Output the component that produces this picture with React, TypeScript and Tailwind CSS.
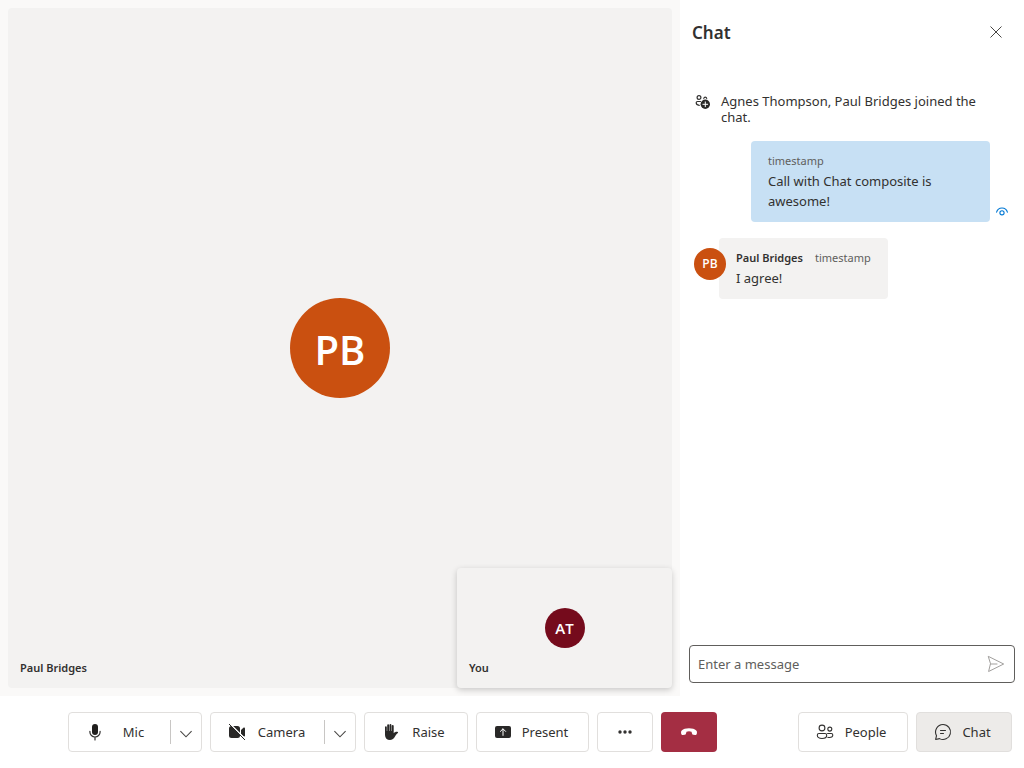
import type { ReactNode } from 'react';

const buttonBox =
  'flex h-10 items-center rounded border border-[#e1dfdd] bg-white text-[13px] text-[#323130]';

const initials = "flex items-center justify-center rounded-full font-['Open_Sans',sans-serif] font-semibold text-white";

function Icon({ children }: { children: ReactNode }) {
  return (
    <svg viewBox="0 0 20 20" className="h-5 w-5 shrink-0" fill="none" aria-hidden="true">
      {children}
    </svg>
  );
}

const MicIcon = () => (
  <Icon>
    <rect x="7" y="2" width="6" height="11" rx="3" fill="#201f1e" />
    <path d="M4.900 9.300v.6a5.100 5.100 0 0 0 10.200 0v-.6M10 15.200V18" stroke="#323130" strokeWidth="1.200" strokeLinecap="round" />
  </Icon>
);

const CameraOffIcon = () => (
  <Icon>
    <rect x="2" y="4" width="11" height="12" rx="2.500" fill="#292827" />
    <path d="m14 7.900 2.700-2.300c.5-.4 1.300-.1 1.300.6v7.600c0 .7-.8 1-1.300.6L14 12.100Z" fill="#292827" />
    <path d="m3 1.700 15.500 15.500" stroke="#fff" strokeWidth="1.300" />
    <path d="m2.300 2.300 15.400 15.400" stroke="#292827" strokeWidth="1" strokeLinecap="round" />
  </Icon>
);

const HandIcon = () => (
  <Icon>
    <path
      d="M4 5.200a.9.9 0 0 1 1.800 0V9h.4V3.300a.95.95 0 0 1 1.900 0V9h.4V2.900a.95.95 0 0 1 1.900 0V9h.4V3.900a.9.9 0 0 1 1.900 0v7.300c.9-1 2.100-1.600 3.600-1.400.8.100 1 .8.500 1.300-1.600 1.200-2.300 2.900-3.400 4.500C12.300 17.200 11 18 9 18c-3 0-5-1.900-5-5Z"
      fill="#292827"
    />
  </Icon>
);

const PresentIcon = () => (
  <Icon>
    <rect x="2" y="4" width="16" height="12" rx="2" fill="#292827" />
    <path d="M10 13.400V7M7.400 9.400 10 6.800l2.600 2.600" stroke="#fff" strokeLinecap="round" strokeLinejoin="round" />
  </Icon>
);

const MoreIcon = () => (
  <Icon>
    <g fill="#323130">
      <circle cx="5" cy="10" r="1.700" />
      <circle cx="10" cy="10" r="1.700" />
      <circle cx="15" cy="10" r="1.700" />
    </g>
  </Icon>
);

const EndCallIcon = () => (
  <Icon>
    <path
      d="m17.950 10.970-.16.840c-.15.790-.87 1.300-1.700 1.220l-1.630-.16c-.72-.07-1.250-.6-1.460-1.370l-.5-1.750a6.600 6.600 0 0 0-5 0L7 11.500c-.2.770-.73 1.300-1.450 1.370l-1.640.16c-.82.080-1.540-.43-1.700-1.220l-.160-.840c-.18-.9.080-1.800.7-2.440C4.300 7 6.750 6.200 10 6.200s5.700.8 7.260 2.330c.62.640.87 1.540.69 2.440Z"
      fill="#fff"
    />
  </Icon>
);

const PeopleIcon = () => (
  <Icon>
    <g stroke="#323130" strokeWidth="1.100">
      <circle cx="7" cy="6" r="2.900" />
      <circle cx="14.800" cy="7.100" r="2" />
      <path d="M4 11.500h6a1.700 1.700 0 0 1 1.700 1.700c0 2.100-1.900 3.300-4.700 3.300s-4.700-1.200-4.700-3.300A1.700 1.700 0 0 1 4 11.500Z" />
      <path d="M12.600 11.500h3.700a1.500 1.500 0 0 1 1.500 1.500c0 1.600-1.400 2.500-3.400 2.500-.6 0-1.100-.1-1.600-.2" strokeLinecap="round" />
    </g>
  </Icon>
);

const ChatIcon = () => (
  <Icon>
    <path d="M10 2.500a7.500 7.500 0 1 1-3.500 14.130l-3.850.86.870-3.840A7.500 7.500 0 0 1 10 2.500Z" stroke="#323130" strokeWidth="1.100" strokeLinejoin="round" />
    <path d="M7.500 8.500h5M7.500 11.500h3" stroke="#323130" strokeLinecap="round" />
  </Icon>
);

const ChevronIcon = () => (
  <svg viewBox="0 0 12 12" className="h-3 w-3" fill="none" aria-hidden="true">
    <path d="m.4 3.200 5.600 5.600 5.600-5.600" stroke="#484644" strokeWidth="1.100" />
  </svg>
);

function SplitButton({ icon, label, width }: { icon: ReactNode; label: string; width: string }) {
  return (
    <div className={`${buttonBox} ${width}`}>
      <button type="button" className="flex h-full flex-1 items-center gap-2 px-4">
        {icon}
        <span className="flex-1 pt-0.5 text-center">{label}</span>
      </button>
      <button type="button" aria-label={`${label} options`} className="flex h-6 w-[31px] items-center justify-center border-l border-[#c8c6c4] pt-1">
        <ChevronIcon />
      </button>
    </div>
  );
}

function BarButton({ icon, label, width, active }: { icon: ReactNode; label: string; width: string; active?: boolean }) {
  return (
    <button type="button" className={`${buttonBox} ${width} gap-1 pr-[15px] pl-4 ${active ? 'bg-[#edebe9]!' : ''}`}>
      {icon}
      <span className="flex-1 pt-0.5 text-center">{label}</span>
    </button>
  );
}

function ChatPane() {
  return (
    <aside className="flex w-[344px] shrink-0 flex-col">
      <header className="flex h-16 items-center justify-between pr-5 pl-3">
        <h2 className="pt-0.5 text-[17px] leading-6 font-semibold">Chat</h2>
        <button type="button" aria-label="Close" className="flex h-4 w-4 items-center justify-center">
          <svg viewBox="0 0 12 12" className="h-3 w-3" fill="none" aria-hidden="true">
            <path d="m.5.500 11 11M11.500.500l-11 11" stroke="#484644" />
          </svg>
        </button>
      </header>

      <div className="flex flex-1 flex-col pt-[29px]">
        <div className="flex gap-2 pr-8 pl-[13px] text-[13px] leading-4">
          <Icon>
            <g stroke="#323130" strokeWidth="1.200">
              <circle cx="6" cy="4.500" r="1.900" />
              <path d="M10.800 5.300a1.500 1.500 0 0 1 2.900 0M7.500 8.500h-3a1.300 1.300 0 0 0-1.300 1.300c0 1.500 1.200 2.400 3 2.600" strokeLinecap="round" />
            </g>
            <circle cx="12.300" cy="11.300" r="4.700" fill="#292827" />
            <path d="M12.300 8.900v4.800M9.900 11.300h4.800" stroke="#fff" strokeLinecap="round" />
          </Icon>
          <p>Agnes Thompson, Paul Bridges joined the chat.</p>
        </div>

        <div className="mt-4 flex items-end justify-end gap-[6px] pr-4">
          <div className="w-[239px] rounded bg-[#c7e0f4] px-[17px] pt-[10px] pb-[11px] text-[13px] leading-5">
            <div className="text-[11px] leading-5 text-[#605e5c]">timestamp</div>
            <p>Call with Chat composite is awesome!</p>
          </div>
          <svg viewBox="0 0 12 12" className="mb-1 h-3 w-3" fill="none" aria-label="Seen" role="img">
            <path d="M.6 6.200C1.300 3.500 3.400 2 6 2s4.700 1.500 5.400 4.200" stroke="#0078d4" strokeWidth="1.100" strokeLinecap="round" />
            <circle cx="6" cy="6.800" r="2.100" stroke="#0078d4" strokeWidth="1.100" />
          </svg>
        </div>

        <div className="mt-4 flex pl-[14px]">
          <div className={`${initials} z-10 mt-[10px] -mr-[7px] h-8 w-8 bg-[#ca5010] text-xs`}>PB</div>
          <div className="rounded bg-[#f3f2f1] px-[17px] pt-[10px] pb-[11px] text-[13px] leading-5">
            <div className="flex gap-3 text-[11px] leading-5">
              <span className="font-semibold">Paul Bridges</span>
              <span className="text-[#605e5c]">timestamp</span>
            </div>
            <p>I agree!</p>
          </div>
        </div>
      </div>

      <form className="mr-[9px] mb-[13px] ml-[9px] flex h-[38px] items-center rounded border border-[#605e5c] px-2">
        <input
          type="text"
          aria-label="Enter a message"
          placeholder="Enter a message"
          className="min-w-0 flex-1 pt-0.5 text-[13px] outline-none placeholder:text-[#605e5c]"
        />
        <button type="button" aria-label="Send message">
          <Icon>
            <path d="M2.600 2.500 17.700 10 2.600 17.500 4.400 10Z M4.400 10h6.600" stroke="#a19f9d" strokeLinejoin="round" strokeLinecap="round" />
          </Icon>
        </button>
      </form>
    </aside>
  );
}

export default function App() {
  return (
    <div className="flex h-screen flex-col bg-white font-['Noto_Sans',sans-serif] text-[#323130]">
      <div className="flex min-h-0 flex-1">
        <main className="flex flex-1 bg-[#faf9f8] p-2">
          <section className="relative flex flex-1 items-center justify-center rounded bg-[#f3f2f1]">
            <div className={`${initials} h-[100px] w-[100px] bg-[#ca5010] pt-1 text-[40px]`}>PB</div>
            <span className="absolute bottom-3 left-3 text-[11px] leading-4 font-semibold">Paul Bridges</span>
            <div className="absolute right-0 bottom-0 flex h-[120px] w-[215px] items-center justify-center rounded bg-[#f3f2f1] shadow-[0_2px_6px_rgba(0,0,0,0.2)]">
              <div className={`${initials} h-10 w-10 bg-[#750b1c] text-[15px]`}>AT</div>
              <span className="absolute bottom-3 left-3 text-[11px] leading-4 font-semibold">You</span>
            </div>
          </section>
        </main>
        <ChatPane />
      </div>

      <footer className="flex h-[72px] shrink-0 items-center justify-between pr-3 pl-[68px]">
        <div className="flex gap-2">
          <SplitButton icon={<MicIcon />} label="Mic" width="w-[134px]" />
          <SplitButton icon={<CameraOffIcon />} label="Camera" width="w-[146px]" />
          <BarButton icon={<HandIcon />} label="Raise" width="w-[104px]" />
          <BarButton icon={<PresentIcon />} label="Present" width="w-[113px]" />
          <button type="button" aria-label="More" className={`${buttonBox} w-14 justify-center`}>
            <MoreIcon />
          </button>
          <button type="button" aria-label="Leave" className="flex h-10 w-14 items-center justify-center rounded bg-[#a42e43]">
            <EndCallIcon />
          </button>
        </div>
        <div className="flex gap-2">
          <BarButton icon={<PeopleIcon />} label="People" width="w-[110px]" />
          <BarButton icon={<ChatIcon />} label="Chat" width="w-24" active />
        </div>
      </footer>
    </div>
  );
}
